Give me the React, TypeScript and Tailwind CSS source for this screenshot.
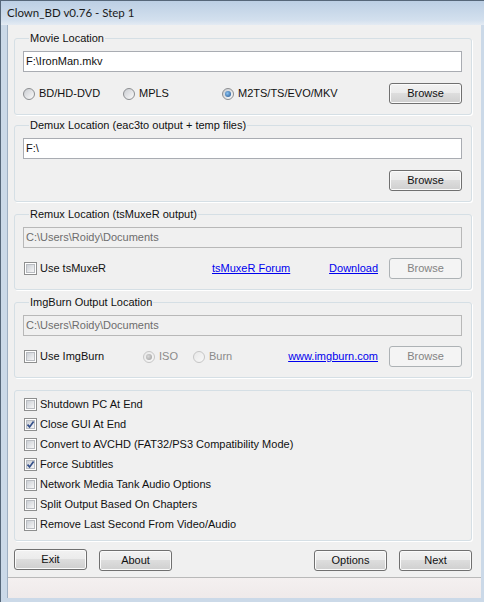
import React from "react";

const font = "font-['Liberation_Sans',Arial,sans-serif]";

const Check = ({ checked = false }: { checked?: boolean }) => (
  <span className="flex h-[13px] w-[13px] shrink-0 border border-[#8e8f8f] bg-white p-px">
    <span className="relative flex h-full w-full border border-[#b9bcc1] bg-[linear-gradient(135deg,#cbcfd5,#f6f6f6)]">
      {checked && (
        <svg viewBox="0 0 9 9" className="absolute -left-px -top-px h-[9px] w-[9px]">
          <path d="M1.5 4.6 L3.6 6.9 L7.6 1.6" fill="none" stroke="#35508a" strokeWidth="1.7" />
        </svg>
      )}
    </span>
  </span>
);

const Radio = ({ on = false, disabled = false }: { on?: boolean; disabled?: boolean }) => (
  <span
    className={
      "flex h-[12px] w-[12px] shrink-0 items-center justify-center rounded-full border " +
      (disabled
        ? "border-[#c6c6c6] bg-[linear-gradient(135deg,#e8e8e8,#f8f8f8)]"
        : "border-[#8b8d90] bg-[linear-gradient(135deg,#c9ccd1,#fbfbfb)]")
    }
  >
    {on && (
      <span
        className={
          "h-[6px] w-[6px] rounded-full " +
          (disabled
            ? "bg-[radial-gradient(circle_at_40%_40%,#d8d8d8,#9c9c9c)]"
            : "bg-[radial-gradient(circle_at_40%_40%,#8cc4f2,#1d4f8c)]")
        }
      />
    )}
  </span>
);

const Button = ({ label, disabled = false, w = "w-[73px]" }: { label: string; disabled?: boolean; w?: string }) => (
  <button
    className={
      "h-[21px] shrink-0 rounded-[3px] border text-[11px] leading-[13px] " +
      w +
      (disabled
        ? " border-[#adb2b5] bg-[#f4f4f4] text-[#838383]"
        : " border-[#707070] bg-[linear-gradient(#f2f2f2_0%,#ebebeb_50%,#dddddd_50%,#cfcfcf_100%)] text-[#111] shadow-[inset_0_0_0_1px_#fbfbfb]")
    }
  >
    {label}
  </button>
);

const TextBox = ({ value, disabled = false }: { value: string; disabled?: boolean }) => (
  <div
    className={
      "flex h-[21px] items-center border pl-[2px] text-[11px] " +
      (disabled ? "border-[#b8b8b8] bg-[#f0f0f0] text-[#6d6d6d]" : "border-[#a9acb2] bg-white text-[#111]")
    }
  >
    {value}
  </div>
);

const Group = ({ title, children, className = "" }: { title?: string; children: React.ReactNode; className?: string }) => (
  <fieldset className={"rounded-[3px] border border-[#d5dfe5] shadow-[1px_1px_0_#fff] " + className}>
    {title && <legend className="ml-[6px] px-px text-[11px] leading-[14px]">{title}</legend>}
    {children}
  </fieldset>
);

const Link = ({ children }: { children: React.ReactNode }) => (
  <span className="cursor-pointer text-[11px] text-[#0000ee] underline">{children}</span>
);

const options: [string, boolean][] = [
  ["Shutdown PC At End", false],
  ["Close GUI At End", true],
  ["Convert to AVCHD (FAT32/PS3 Compatibility Mode)", false],
  ["Force Subtitles", true],
  ["Network Media Tank Audio Options", false],
  ["Split Output Based On Chapters", false],
  ["Remove Last Second From Video/Audio", false],
];

export default function App() {
  return (
    <div className={"flex h-[602px] w-[484px] flex-col border-l border-t border-[#566779] bg-[#cbd9e8] text-[#111] " + font}>
      {/* caption */}
      <div className="flex h-[24px] shrink-0 items-center bg-[linear-gradient(#bccfe4,#d3e0ee_80%,#e4ebf3)] pl-[6px] font-['Lato',sans-serif] text-[11.5px] text-[#1b1b1b]">
        Clown_BD v0.76 - Step 1
      </div>

      <div className="flex min-h-0 flex-1 pl-[6px] pr-[3px] pb-[4px]">
        <div className="flex flex-1 flex-col border-l border-[#9fb0c3] bg-[#f0f0f0] pt-[6px]">
          <div className="flex flex-col pl-[6px] pr-[9px]">
            <Group title="Movie Location" className="pb-[10px] pl-[8px] pr-[9px]">
              <div className="mt-[6px]">
                <TextBox value={"F:\\IronMan.mkv"} />
              </div>
              <div className="mt-[11px] flex items-center text-[11px]">
                <label className="flex w-[100px] items-center gap-[4px]">
                  <Radio />
                  BD/HD-DVD
                </label>
                <label className="flex w-[99px] items-center gap-[4px]">
                  <Radio />
                  MPLS
                </label>
                <label className="flex items-center gap-[4px]">
                  <Radio on />
                  M2TS/TS/EVO/MKV
                </label>
                <span className="ml-auto">
                  <Button label="Browse" />
                </span>
              </div>
            </Group>

            <Group title="Demux Location (eac3to output + temp files)" className="mt-[3px] pb-[10px] pl-[8px] pr-[9px]">
              <div className="mt-[6px]">
                <TextBox value={"F:\\"} />
              </div>
              <div className="mt-[11px] flex justify-end">
                <Button label="Browse" />
              </div>
            </Group>

            <Group title="Remux Location (tsMuxeR output)" className="mt-[5px] pb-[10px] pl-[8px] pr-[9px]">
              <div className="mt-[6px]">
                <TextBox value={"C:\\Users\\Roidy\\Documents"} disabled />
              </div>
              <div className="mt-[10px] flex items-center text-[11px]">
                <label className="ml-px flex w-[188px] items-center gap-[3px]">
                  <Check />
                  Use tsMuxeR
                </label>
                <Link>tsMuxeR Forum</Link>
                <span className="ml-auto mr-[11px]">
                  <Link>Download</Link>
                </span>
                <Button label="Browse" disabled />
              </div>
            </Group>

            <Group title="ImgBurn Output Location" className="mt-[5px] pb-[10px] pl-[8px] pr-[9px]">
              <div className="mt-[6px]">
                <TextBox value={"C:\\Users\\Roidy\\Documents"} disabled />
              </div>
              <div className="mt-[10px] flex items-center text-[11px]">
                <label className="ml-px flex w-[119px] items-center gap-[3px]">
                  <Check />
                  Use ImgBurn
                </label>
                <label className="flex w-[50px] items-center gap-[4px] text-[#8a8a8a]">
                  <Radio on disabled />
                  ISO
                </label>
                <label className="flex items-center gap-[4px] text-[#8a8a8a]">
                  <Radio disabled />
                  Burn
                </label>
                <span className="ml-auto mr-[11px]">
                  <Link>www.imgburn.com</Link>
                </span>
                <Button label="Browse" disabled />
              </div>
            </Group>

            <Group className="mt-[12px] pb-[6px] pl-[9px] pt-[3px]">
              {options.map(([label, checked]) => (
                <label key={label} className="flex h-[20px] items-center gap-[3px] text-[11px]">
                  <Check checked={checked} />
                  {label}
                </label>
              ))}
            </Group>

            <div className="mt-[6px] flex items-center">
              <Button label="Exit" />
              <span className="ml-[12px]">
                <Button label="About" />
              </span>
              <span className="ml-auto">
                <Button label="Options" />
              </span>
              <span className="ml-[12px]">
                <Button label="Next" />
              </span>
            </div>
          </div>

          {/* status strip */}
          <div className="mt-auto h-[21px] border-t border-[#b9b9b9] bg-[linear-gradient(#f4f0f0,#efeaea)]" />
        </div>
      </div>
    </div>
  );
}
